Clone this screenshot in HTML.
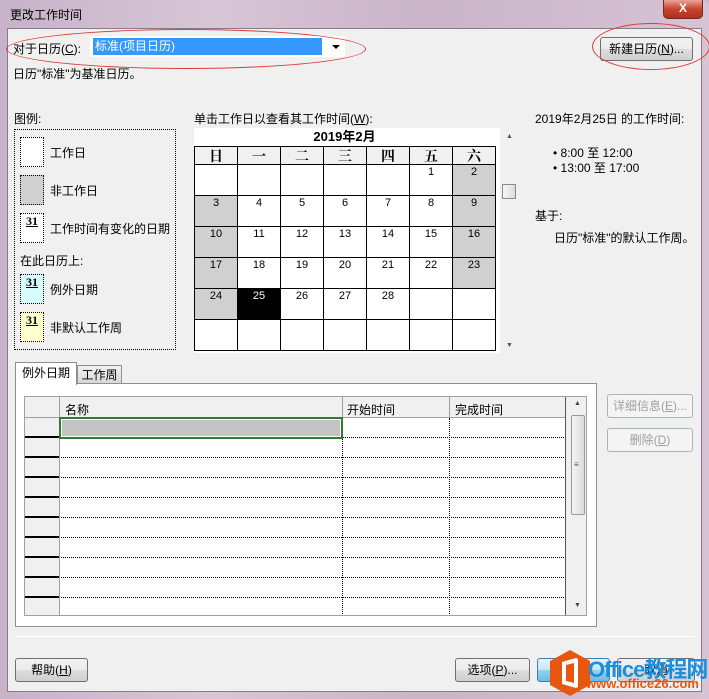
<!DOCTYPE html>
<html><head><meta charset="utf-8"><style>
*{margin:0;padding:0;box-sizing:border-box}
body{width:709px;height:699px;overflow:hidden;background:#c9b6cc;font-family:"Liberation Sans","Noto Sans CJK SC",sans-serif;font-size:12px;color:#000;position:relative}
.a{position:absolute;white-space:nowrap}
.frame{position:absolute;left:0;top:0;width:709px;height:699px;background:linear-gradient(90deg,#c7b3c9,#d8c6d6 30%,#c9b4c8 60%,#d6c3d4);border-radius:6px 6px 0 0}
.client{position:absolute;left:7px;top:28px;width:695px;height:664px;background:#f0f0f0;border:1px solid #8a7a8c}
.btn{position:absolute;border:1px solid #707070;border-radius:3px;background:linear-gradient(#f2f2f2,#ebebeb 50%,#dddddd 51%,#cfcfcf);text-align:center;font-size:12px}
.dis{color:#a0a0a0;border-color:#adb2b5;background:#f4f4f4}
.cal td{border:1px solid #000;width:43px;height:31px;vertical-align:top;text-align:center;font-family:"Liberation Sans","Noto Sans CJK SC",sans-serif;font-size:11px;padding-top:1px;line-height:13px}
.cal{border-collapse:collapse;position:absolute;left:194px;top:146px;table-layout:fixed}
.cal tr{height:31px}
.cal tr.h{height:18px}
.cal th{border:1px solid #000;background:#f0f0f0;font-size:14px;font-weight:bold;font-family:"Noto Serif CJK SC",serif;line-height:16px;padding:0}
.g{background:#d0d0d0}
.lg{position:absolute;left:20px;width:24px;height:30px;border:1px dotted #000;font-family:"Liberation Serif",serif;font-weight:bold;font-size:12px;text-align:center;text-decoration:underline;line-height:14px}
.grid{position:absolute;left:24px;top:396px;width:563px;height:220px;border:1px solid #a0a0a0;background:#fff;overflow:hidden}
.row{position:absolute;left:0;width:541px;height:20px;border-bottom:1px dotted #000}
.rh{position:absolute;left:0;width:34px;height:20px;border-bottom:2px solid #000;background:#f0f0f0}
</style></head><body>
<div class="frame"></div>
<div class="a" style="left:10px;top:6px;font-size:12px">更改工作时间</div>
<div class="a" style="left:663px;top:0;width:40px;height:19px;background:linear-gradient(#e8a496,#c8432e 50%,#b12f1c);border:1px solid #6b2a26;border-top:none;border-radius:0 0 5px 5px;color:#fff;font-weight:bold;text-align:center;font-size:12px;line-height:17px">X</div>
<div class="client"></div>

<div class="a" style="left:13px;top:40px">对于日历(<u>C</u>):</div>
<div class="a" style="left:90px;top:36px;width:255px;height:21px;background:#fff;border:1px solid #fff"></div>
<div class="a" style="left:93px;top:38px;width:229px;height:17px;background:#3399ff;color:#fff;padding-left:2px;line-height:17px">标准(项目日历)</div>
<div class="a" style="left:332px;top:45px;width:0;height:0;border-left:4px solid transparent;border-right:4px solid transparent;border-top:4px solid #000"></div>
<div class="a" style="left:6px;top:29px;width:360px;height:40px;border:1px solid #e03a3a;border-radius:50%"></div>
<div class="btn" style="left:600px;top:37px;width:93px;height:24px;line-height:22px">新建日历(<u>N</u>)...</div>
<div class="a" style="left:592px;top:23px;width:118px;height:47px;border:1px solid #e03a3a;border-radius:50%"></div>
<div class="a" style="left:13px;top:65px">日历"标准"为基准日历。</div>

<div class="a" style="left:14px;top:110px">图例:</div>
<div class="a" style="left:14px;top:129px;width:162px;height:221px;border:1px dotted #000"></div>
<div class="lg" style="top:137px;background:#fff"></div><div class="a" style="left:50px;top:144px">工作日</div>
<div class="lg" style="top:175px;background:#d0d0d0"></div><div class="a" style="left:50px;top:182px">非工作日</div>
<div class="lg" style="top:213px;background:#fff">31</div><div class="a" style="left:50px;top:220px">工作时间有变化的日期</div>
<div class="a" style="left:20px;top:252px">在此日历上:</div>
<div class="lg" style="top:274px;background:#d6fbfb">31</div><div class="a" style="left:50px;top:281px">例外日期</div>
<div class="lg" style="top:312px;background:#ffffd0">31</div><div class="a" style="left:50px;top:319px">非默认工作周</div>

<div class="a" style="left:194px;top:110px">单击工作日以查看其工作时间(<u>W</u>):</div>
<div class="a" style="left:194px;top:128px;width:306px;height:225px;background:#fff"></div>
<div class="a" style="left:194px;top:129px;width:301px;text-align:center;font-weight:bold;font-size:13px;line-height:16px;font-family:'Liberation Sans','Noto Sans CJK SC',sans-serif">2019年2月</div>
<table class="cal">
<tr class="h"><th>日</th><th>一</th><th>二</th><th>三</th><th>四</th><th>五</th><th>六</th></tr>
<tr><td></td><td></td><td></td><td></td><td></td><td>1</td><td class="g">2</td></tr>
<tr><td class="g">3</td><td>4</td><td>5</td><td>6</td><td>7</td><td>8</td><td class="g">9</td></tr>
<tr><td class="g">10</td><td>11</td><td>12</td><td>13</td><td>14</td><td>15</td><td class="g">16</td></tr>
<tr><td class="g">17</td><td>18</td><td>19</td><td>20</td><td>21</td><td>22</td><td class="g">23</td></tr>
<tr><td class="g">24</td><td style="background:#000;color:#fff">25</td><td>26</td><td>27</td><td>28</td><td></td><td></td></tr>
<tr><td></td><td></td><td></td><td></td><td></td><td></td><td></td></tr>
</table>
<div class="a" style="left:506px;top:133px;font-size:7px;color:#555">▲</div>
<div class="a" style="left:502px;top:184px;width:14px;height:15px;border:1px solid #8a8a8a;background:linear-gradient(90deg,#f5f5f5,#dcdcdc)"></div>
<div class="a" style="left:506px;top:342px;font-size:7px;color:#555">▼</div>

<div class="a" style="left:535px;top:110px">2019年2月25日 的工作时间:</div>
<div class="a" style="left:553px;top:144px">• 8:00 至 12:00</div>
<div class="a" style="left:553px;top:159px">• 13:00 至 17:00</div>
<div class="a" style="left:535px;top:207px">基于:</div>
<div class="a" style="left:554px;top:229px">日历"标准"的默认工作周。</div>

<div class="a" style="left:77px;top:365px;width:45px;height:19px;border:1px solid #8e8f8f;background:linear-gradient(#f2f2f2,#d8d8d8);text-align:center;line-height:18px">工作周</div>
<div class="a" style="left:15px;top:383px;width:582px;height:244px;border:1px solid #8e8f8f;background:#fff"></div>
<div class="a" style="left:15px;top:362px;width:62px;height:23px;border:1px solid #8e8f8f;border-bottom:none;background:#fff;text-align:center;line-height:20px">例外日期</div>

<div class="grid">
<div class="a" style="left:0;top:0;width:541px;height:21px;background:#f0f0f0;border-bottom:1px solid #a0a0a0"></div>
<div class="a" style="left:40px;top:4px">名称</div>
<div class="a" style="left:322px;top:4px">开始时间</div>
<div class="a" style="left:430px;top:4px">完成时间</div>
<div class="row" style="top:21px"></div><div class="row" style="top:41px"></div><div class="row" style="top:61px"></div><div class="row" style="top:81px"></div><div class="row" style="top:101px"></div><div class="row" style="top:121px"></div><div class="row" style="top:141px"></div><div class="row" style="top:161px"></div><div class="row" style="top:181px"></div>
<div class="rh" style="top:0;height:21px;border-bottom:1px solid #a0a0a0"></div>
<div class="rh" style="top:21px"></div><div class="rh" style="top:41px"></div><div class="rh" style="top:61px"></div><div class="rh" style="top:81px"></div><div class="rh" style="top:101px"></div><div class="rh" style="top:121px"></div><div class="rh" style="top:141px"></div><div class="rh" style="top:161px"></div><div class="rh" style="top:181px"></div><div class="rh" style="top:201px;border:none;height:20px"></div>
<div class="a" style="left:34px;top:0;width:1px;height:220px;background:#a0a0a0"></div>
<div class="a" style="left:317px;top:21px;width:0;height:200px;border-left:1px dotted #000"></div>
<div class="a" style="left:317px;top:0;width:1px;height:21px;background:#a0a0a0"></div>
<div class="a" style="left:424px;top:21px;width:0;height:200px;border-left:1px dotted #000"></div>
<div class="a" style="left:424px;top:0;width:1px;height:21px;background:#a0a0a0"></div>
<div class="a" style="left:540px;top:0;width:1px;height:220px;background:#555"></div>
<div class="a" style="left:34px;top:20px;width:284px;height:22px;border:2px solid #2e7d32;background:#c4c4c4;box-shadow:inset 0 0 0 1px #fff"></div>
<div class="a" style="left:541px;top:0;width:22px;height:220px;background:#f0f0f0"></div>
<div class="a" style="left:546px;top:18px;width:14px;height:100px;border:1px solid #999;border-radius:2px;background:linear-gradient(90deg,#f4f4f4,#dcdcdc)"></div>
<div class="a" style="left:549px;top:3px;font-size:7px;color:#444">▲</div>
<div class="a" style="left:549px;top:205px;font-size:7px;color:#444">▼</div>
<div class="a" style="left:549px;top:63px;font-size:8px;color:#555">≡</div>
</div>

<div class="btn dis" style="left:607px;top:394px;width:86px;height:24px;line-height:22px">详细信息(<u>E</u>)...</div>
<div class="btn dis" style="left:607px;top:428px;width:86px;height:24px;line-height:22px">删除(<u>D</u>)</div>

<div class="a" style="left:15px;top:636px;width:680px;height:1px;background:#dcdcdc;border-bottom:1px solid #fff"></div>
<div class="btn" style="left:15px;top:658px;width:73px;height:24px;line-height:22px">帮助(<u>H</u>)</div>
<div class="btn" style="left:455px;top:658px;width:75px;height:24px;line-height:22px">选项(<u>P</u>)...</div>
<div class="btn" style="left:537px;top:658px;width:73px;height:24px;line-height:22px;border-color:#3c7fb1;background:linear-gradient(#e5f4fc,#c4e5f6 50%,#98d1ef 51%,#6cbbe6)">确定</div>
<div class="btn" style="left:617px;top:658px;width:78px;height:24px;line-height:22px">取消</div>

<svg class="a" style="left:545px;top:648px" width="50" height="50" viewBox="0 0 50 50"><polygon points="25,2 45,13 45,37 25,48 5,37 5,13" fill="#e8570f"/><path d="M17 14 L31 10 L33 11 L33 39 L31 40 L17 36 Z M21 17 L21 33 L29 35 L29 15 Z" fill="#fff"/></svg>
<div class="a" style="left:588px;top:652px;font-size:22px;font-weight:bold;color:#1a8fe0;letter-spacing:-1px">Office教程网</div>
<div class="a" style="left:586px;top:676px;font-size:13px;font-weight:bold;color:#e8570f">www.office26.com</div>
</body></html>
